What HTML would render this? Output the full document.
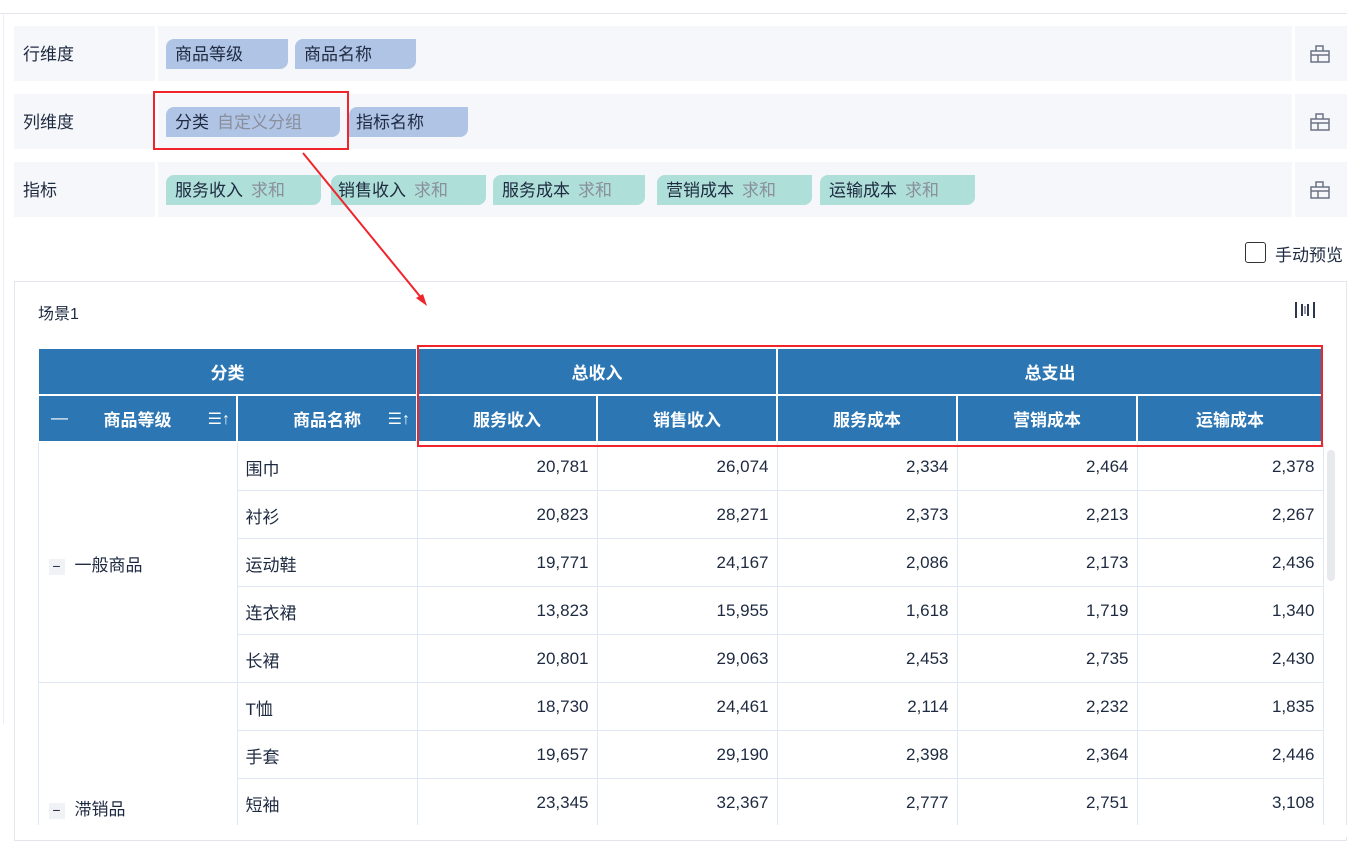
<!DOCTYPE html>
<html><head><meta charset="utf-8"><style>
*{margin:0;padding:0;box-sizing:border-box}
body{width:1347px;height:837px;overflow:hidden;background:#fff;font-family:"Liberation Sans","Noto Sans CJK SC",sans-serif;color:#1e2a40;position:relative}
.a{position:absolute}
.lab{position:absolute;left:14px;width:141px;height:55px;background:#f6f7fb;font-size:17px;line-height:57px;padding-left:9px}
.cont{position:absolute;left:158px;width:1134px;height:55px;background:#f6f7fb}
.ic{position:absolute;left:1295px;width:52px;height:55px;background:#f6f7fb}
.chip{position:absolute;height:30px;line-height:31px;font-size:17px;padding-left:9px;border-radius:8px 0 8px 0;white-space:nowrap}
.b{background:#b0c4e6}.g{background:#aedfd8}
.chip i{font-style:normal;color:#8a8f9c;margin-left:8px}
table{position:absolute;left:37px;top:347px;border-collapse:collapse;table-layout:fixed}
th{background:#2b76b3;color:#fff;font-size:17px;font-weight:bold;border:2px solid #fff;height:47px;text-align:center;position:relative}
td{border:1px solid #dde8f3;height:48px;font-size:17px;text-align:right;padding-right:8px;padding-top:2px}
td.n{text-align:left;padding-left:8px}
.srt{position:absolute;right:6px;top:13px;font-size:16px;font-weight:normal}
.mn{display:inline-block;width:16px;height:16px;background:#f0f2f5;text-align:center;line-height:15px;font-size:14px;margin-right:10px}
</style></head><body>
<div class="a" style="left:0;top:13px;width:1347px;height:1px;background:#e4e6ec"></div>
<div class="a" style="left:3px;top:14px;width:1px;height:710px;background:#eceef3"></div>

<div class="lab" style="top:26px">行维度</div><div class="cont" style="top:26px"></div><div class="ic" style="top:26px"></div>
<div class="lab" style="top:94px">列维度</div><div class="cont" style="top:94px"></div><div class="ic" style="top:94px"></div>
<div class="lab" style="top:162px">指标</div><div class="cont" style="top:162px"></div><div class="ic" style="top:162px"></div>

<div class="chip b" style="left:166px;top:39px;width:122px">商品等级</div>
<div class="chip b" style="left:295px;top:39px;width:121px">商品名称</div>
<div class="chip b" style="left:166px;top:107px;width:174px">分类<i>自定义分组</i></div>
<div class="chip b" style="left:349px;top:107px;width:119px;padding-left:7px">指标名称</div>
<div class="chip g" style="left:166px;top:175px;width:155px">服务收入<i>求和</i></div>
<div class="chip g" style="left:331px;top:175px;width:155px;padding-left:7px">销售收入<i>求和</i></div>
<div class="chip g" style="left:493px;top:175px;width:152px">服务成本<i>求和</i></div>
<div class="chip g" style="left:657px;top:175px;width:155px">营销成本<i>求和</i></div>
<div class="chip g" style="left:820px;top:175px;width:155px">运输成本<i>求和</i></div>

<svg class="a" style="left:1310px;top:44px" width="20" height="20" viewBox="0 0 20 20"><g fill="none" stroke="#6b7384" stroke-width="1.5"><path d="M6 2h7v5H6zM1 7h18v11H1zM1 11h18M8 11v7"/></g></svg>
<svg class="a" style="left:1310px;top:112px" width="20" height="20" viewBox="0 0 20 20"><g fill="none" stroke="#6b7384" stroke-width="1.5"><path d="M6 2h7v5H6zM1 7h18v11H1zM1 11h18M8 11v7"/></g></svg>
<svg class="a" style="left:1310px;top:180px" width="20" height="20" viewBox="0 0 20 20"><g fill="none" stroke="#6b7384" stroke-width="1.5"><path d="M6 2h7v5H6zM1 7h18v11H1zM1 11h18M8 11v7"/></g></svg>

<div class="a" style="left:1245px;top:242px;width:21px;height:21px;border:1.5px solid #333;border-radius:3px"></div>
<div class="a" style="left:1275px;top:241px;font-size:17px">手动预览</div>

<div class="a" style="left:14px;top:281px;width:1333px;height:560px;border:1px solid #e4e6ec"></div>
<div class="a" style="left:38px;top:300px;font-size:16px">场景1</div>
<svg class="a" style="left:1295px;top:301px" width="20" height="18" viewBox="0 0 20 18"><g stroke="#2d3650" stroke-width="2"><path d="M1 1v16M19 1v16M7 3v12M13 3v12"/></g><path d="M10 5v8" stroke="#2d3650" stroke-width="1"/></svg>

<table>
<colgroup><col style="width:199px"><col style="width:180px"><col style="width:180px"><col style="width:180px"><col style="width:180px"><col style="width:180px"><col style="width:186px"></colgroup>
<tr><th colspan="2">分类</th><th colspan="2">总收入</th><th colspan="3">总支出</th></tr>
<tr><th><span style="position:absolute;left:12px;top:12px;font-weight:normal">—</span>商品等级<span class="srt">☰↑</span></th><th>商品名称<span class="srt">☰↑</span></th><th>服务收入</th><th>销售收入</th><th>服务成本</th><th>营销成本</th><th>运输成本</th></tr>
<tr><td class="n" rowspan="5" style="vertical-align:middle;padding-left:10px"><span class="mn">−</span>一般商品</td><td class="n">围巾</td><td>20,781</td><td>26,074</td><td>2,334</td><td>2,464</td><td>2,378</td></tr>
<tr><td class="n">衬衫</td><td>20,823</td><td>28,271</td><td>2,373</td><td>2,213</td><td>2,267</td></tr>
<tr><td class="n">运动鞋</td><td>19,771</td><td>24,167</td><td>2,086</td><td>2,173</td><td>2,436</td></tr>
<tr><td class="n">连衣裙</td><td>13,823</td><td>15,955</td><td>1,618</td><td>1,719</td><td>1,340</td></tr>
<tr><td class="n">长裙</td><td>20,801</td><td>29,063</td><td>2,453</td><td>2,735</td><td>2,430</td></tr>
<tr><td class="n" rowspan="3" style="vertical-align:bottom;padding-bottom:6px;padding-left:10px;border-bottom:none"><span class="mn">−</span>滞销品</td><td class="n">T恤</td><td>18,730</td><td>24,461</td><td>2,114</td><td>2,232</td><td>1,835</td></tr>
<tr><td class="n">手套</td><td>19,657</td><td>29,190</td><td>2,398</td><td>2,364</td><td>2,446</td></tr>
<tr><td class="n">短袖</td><td>23,345</td><td>32,367</td><td>2,777</td><td>2,751</td><td>3,108</td></tr>
</table>
<div class="a" style="left:0;top:825px;width:1347px;height:12px;background:#fff"></div>
<div class="a" style="left:14px;top:825px;width:1px;height:12px;background:#e4e6ec"></div>
<div class="a" style="left:1327px;top:450px;width:8px;height:131px;background:#e8e9ec;border-radius:4px"></div>

<div class="a" style="left:153px;top:91px;width:196px;height:59px;border:2px solid #f0242b"></div>
<div class="a" style="left:417px;top:345px;width:906px;height:102px;border:2px solid #f0242b"></div>
<svg class="a" style="left:0;top:0" width="1347" height="837"><line x1="303" y1="153" x2="423" y2="300" stroke="#f0242b" stroke-width="2"/><path d="M427 306 L416 298 L423 294 Z" fill="#f0242b"/></svg>
</body></html>
